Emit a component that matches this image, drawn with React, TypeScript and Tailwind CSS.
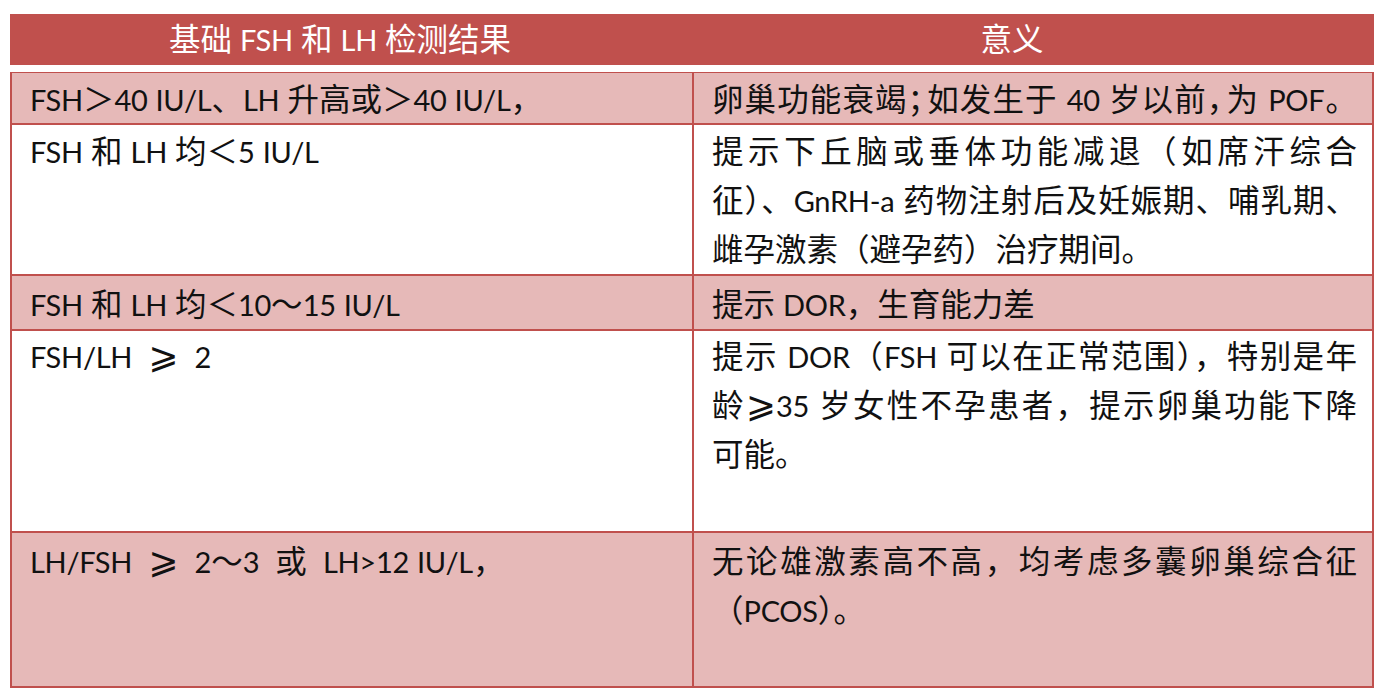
// Table of basal FSH / LH results and what they mean

type Row = {
  pink: boolean;
  height: string;
  pad: string;
  left: string;
  right: string[];
  single?: boolean;
};

const rows: Row[] = [
  {
    pink: true,
    height: "h-[52px]",
    pad: "pt-[2px]",
    left: "FSH＞40 IU/L、LH 升高或＞40 IU/L，",
    right: ["卵巢功能衰竭；如发生于 40 岁以前，为 POF。"],
    single: true,
  },
  {
    pink: false,
    height: "h-[151px]",
    pad: "pt-[2px]",
    left: "FSH 和 LH 均＜5 IU/L",
    right: [
      "提示下丘脑或垂体功能减退（如席汗综合",
      "征）、GnRH-a 药物注射后及妊娠期、哺乳期、",
      "雌孕激素（避孕药）治疗期间。",
    ],
  },
  {
    pink: true,
    height: "h-[55px]",
    pad: "pt-[4px]",
    left: "FSH 和 LH 均＜10～15 IU/L",
    right: ["提示 DOR，生育能力差"],
  },
  {
    pink: false,
    height: "h-[202px]",
    pad: "pt-[1px]",
    left: "FSH/LH  ⩾  2",
    right: [
      "提示 DOR（FSH 可以在正常范围），特别是年",
      "龄⩾35 岁女性不孕患者，提示卵巢功能下降",
      "可能。",
    ],
  },
  {
    pink: true,
    height: "h-[155px]",
    pad: "pt-[4px]",
    left: "LH/FSH  ⩾  2～3  或  LH>12 IU/L，",
    right: ["无论雄激素高不高，均考虑多囊卵巢综合征", "（PCOS）。"],
  },
];

// Latin runs are set a touch smaller so they sit like the Calibri in the source
function Txt({ s, tight }: { s: string; tight?: boolean }) {
  const parts = s.split(/([A-Za-z0-9][A-Za-z0-9/\-.>]*|⩾|；|，)/g);
  return (
    <>
      {parts.map((p, i) => {
        if (!p) return null;
        if (p === "⩾")
          return (
            <span key={i} className="text-[36px] leading-none">
              ⩾
            </span>
          );
        if (p === "；" || p === "，")
          return tight ? (
            <span key={i} className="tracking-[-13px]">
              {p}
            </span>
          ) : (
            p
          );
        if (/^[A-Za-z0-9]/.test(p))
          return (
            <span key={i} className="text-[29px] tracking-[-0.3px]">
              {p}
            </span>
          );
        return p;
      })}
    </>
  );
}

function TableRow({ row }: { row: Row }) {
  return (
    <div
      className={`flex ${row.height} border-b-2 border-[#c0504d] ${
        row.pink ? "bg-[#e6b9b8]" : "bg-white"
      }`}
    >
      {/* result column */}
      <div
        className={`w-[682px] shrink-0 border-r-2 border-[#c0504d] pl-[18px] ${row.pad} whitespace-pre`}
      >
        <Txt s={row.left} />
      </div>

      {/* meaning column */}
      <div className={`flex-1 min-w-0 pl-[18px] pr-[15px] ${row.pad}`}>
        {row.right.map((line, i) => {
          const full = row.single || i < row.right.length - 1;
          return (
            <div
              key={i}
              className={`whitespace-nowrap ${
                full ? "text-justify [text-align-last:justify]" : ""
              }`}
            >
              <Txt s={line} tight={row.single} />
            </div>
          );
        })}
      </div>
    </div>
  );
}

export default function App() {
  return (
    <main className="w-[1378px] h-[696px] bg-white overflow-hidden font-[Lato,'Noto_Sans_CJK_SC','DejaVu_Sans',sans-serif] text-[31.5px] leading-[49px] text-[#111]">
      <div className="ml-[10px] pt-[14px] w-[1364px]">
        {/* Header */}
        <div className="flex h-[51px] bg-[#c0504d] text-white items-center">
          <div className="w-[682px] shrink-0 text-center pr-[22px]">
            基础 <Txt s="FSH" /> 和 <Txt s="LH" /> 检测结果
          </div>
          <div className="flex-1 text-center pr-[42px]">意义</div>
        </div>

        <div className="h-[7px]" />

        {/* Body */}
        <div className="border-x-2 border-t border-[#c0504d]">
          {rows.map((row, i) => (
            <TableRow key={i} row={row} />
          ))}
        </div>
      </div>
    </main>
  );
}
